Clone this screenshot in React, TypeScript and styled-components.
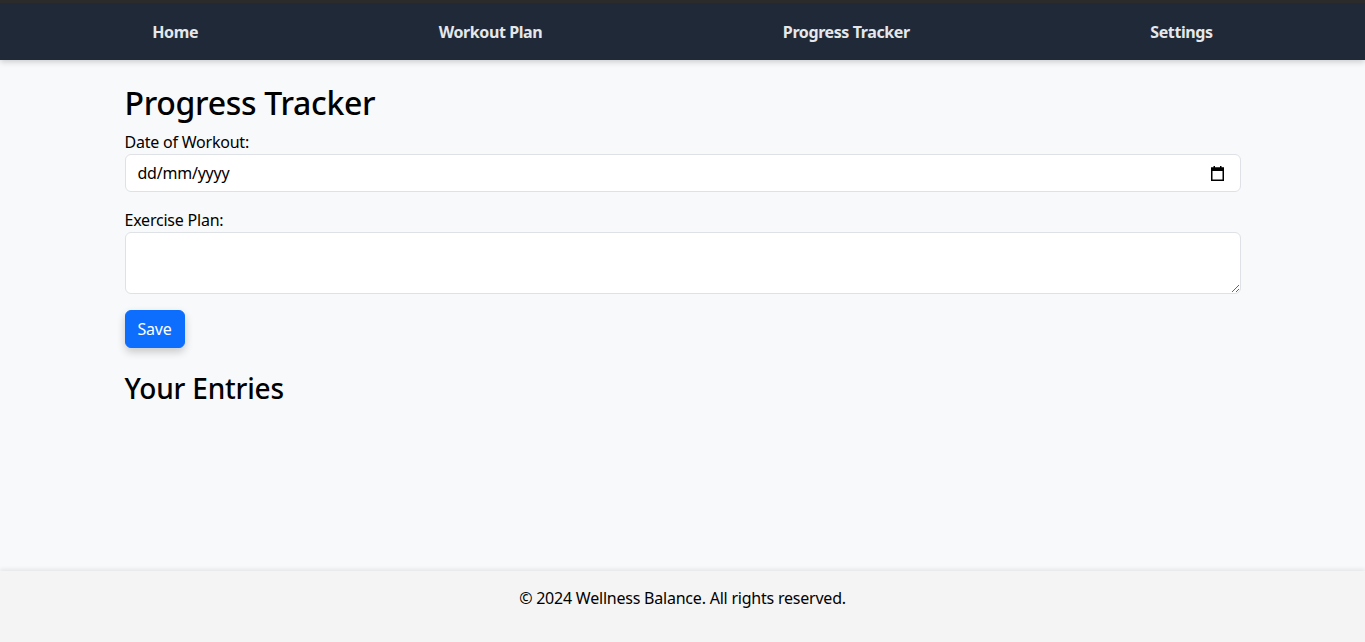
import React from "react";
import styled, { createGlobalStyle } from "styled-components";

const GlobalStyle = createGlobalStyle`
  *, *::before, *::after { box-sizing: border-box; }
  html, body { margin: 0; padding: 0; }
  body {
    background: #f8f9fa;
    color: #212529;
    font-family: "Noto Sans", "DejaVu Sans", sans-serif;
    font-size: 16px;
    line-height: 1.5;
    letter-spacing: -0.22px;
  }
`;

const Page = styled.div`
  min-height: 100vh;
  display: flex;
  flex-direction: column;
`;

const NavBar = styled.nav`
  background: #1f2937;
  border-top: 3px solid #2b2b2b;
  height: 60px;
  display: flex;
  align-items: center;
  justify-content: space-around;
  padding: 0 32px;
  box-shadow: 0 2px 6px rgba(0, 0, 0, 0.18);
  position: relative;
  z-index: 1;
`;

const NavLink = styled.a`
  color: #e5e7eb;
  font-weight: 700;
  font-size: 16px;
  letter-spacing: -0.4px;
  text-decoration: none;
  cursor: pointer;
`;

const Main = styled.main`
  flex: 1;
  width: 100%;
  max-width: 1140px;
  margin: 0 auto;
  padding: 24px 12px 2px;
`;

const Title = styled.h1`
  margin: 0 0 8px;
  font-size: 32px;
  font-weight: 500;
  line-height: 1.2;
  letter-spacing: -0.3px;
  color: #000;
`;

const Field = styled.div`
  margin-bottom: 16px;
`;

const Label = styled.label`
  display: block;
  font-size: 16px;
  color: #000;
`;

const DateBox = styled.div`
  display: flex;
  align-items: center;
  height: 38px;
  background: #fff;
  border: 1px solid #dee2e6;
  border-radius: 6px;
  padding: 0 12px;
`;

const DateText = styled.input`
  flex: 1;
  min-width: 0;
  border: none;
  outline: none;
  background: transparent;
  font-family: inherit;
  font-size: 16px;
  letter-spacing: inherit;
  color: #212529;
  padding: 0;

  &::placeholder {
    color: #000;
    opacity: 1;
  }
`;

const CalendarIcon = styled.svg`
  width: 13px;
  height: 15px;
  flex: none;
  margin-right: 4px;
`;

const TextArea = styled.textarea`
  display: block;
  width: 100%;
  height: 62px;
  font-family: inherit;
  font-size: 16px;
  line-height: 1.5;
  color: #212529;
  background: #fff;
  border: 1px solid #dee2e6;
  border-radius: 6px;
  padding: 6px 12px;
  outline: none;
  resize: vertical;
`;

const SaveButton = styled.button`
  font-family: inherit;
  font-size: 16px;
  line-height: 1.5;
  letter-spacing: inherit;
  color: #fff;
  background: #0d6efd;
  border: 1px solid #0d6efd;
  border-radius: 6px;
  padding: 6px 12px;
  box-shadow: 0 4px 8px rgba(0, 0, 0, 0.2);
  cursor: pointer;
`;

const SubTitle = styled.h2`
  margin: 24px 0 0;
  font-size: 28px;
  font-weight: 500;
  line-height: 1.2;
  letter-spacing: -0.2px;
  color: #000;
`;

const Footer = styled.footer`
  background: #f4f4f4;
  text-align: center;
  padding: 15px 0 32px;
  color: #000;
  box-shadow: 0 -2px 4px rgba(0, 0, 0, 0.08);
`;

export default function App() {
  return (
    <>
      <GlobalStyle />
      <Page>
        <NavBar>
          <NavLink>Home</NavLink>
          <NavLink>Workout Plan</NavLink>
          <NavLink>Progress Tracker</NavLink>
          <NavLink>Settings</NavLink>
        </NavBar>
        <Main>
          <Title>Progress Tracker</Title>
          <form onSubmit={(e) => e.preventDefault()}>
            <Field>
              <Label htmlFor="date">Date of Workout:</Label>
              <DateBox>
                <DateText id="date" type="text" placeholder="dd/mm/yyyy" />
                <CalendarIcon viewBox="0 0 13 15" aria-hidden="true">
                  <rect x="0.75" y="2.25" width="11.5" height="12" fill="none" stroke="#000" strokeWidth="1.5" />
                  <rect x="0" y="1.5" width="13" height="3.5" fill="#000" />
                  <rect x="2.5" y="0" width="1.5" height="2" fill="#000" />
                  <rect x="9" y="0" width="1.5" height="2" fill="#000" />
                </CalendarIcon>
              </DateBox>
            </Field>
            <Field>
              <Label htmlFor="plan">Exercise Plan:</Label>
              <TextArea id="plan" rows={2} />
            </Field>
            <SaveButton type="submit">Save</SaveButton>
          </form>
          <SubTitle>Your Entries</SubTitle>
        </Main>
        <Footer>© 2024 Wellness Balance. All rights reserved.</Footer>
      </Page>
    </>
  );
}
